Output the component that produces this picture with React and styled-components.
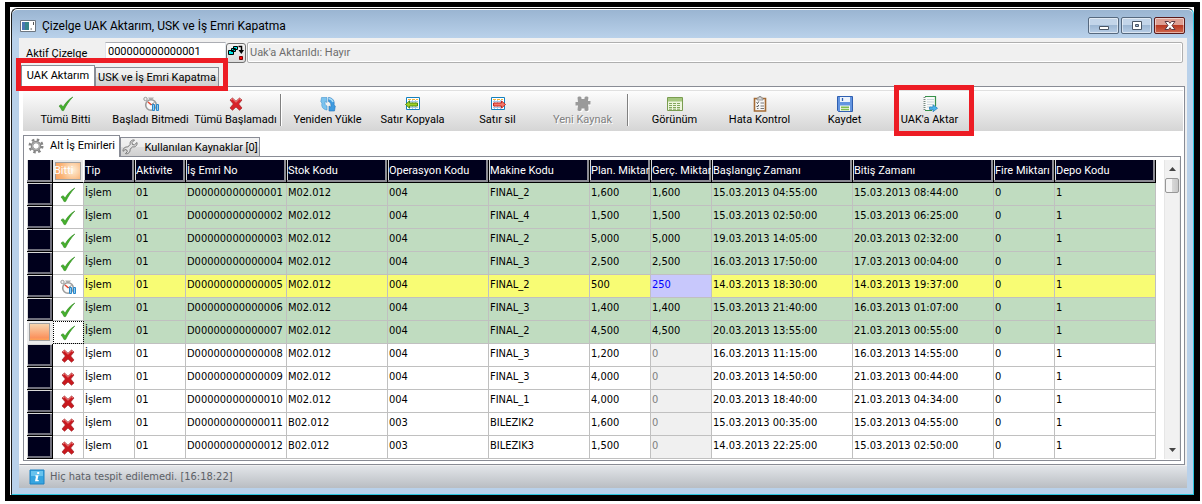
import styled, { createGlobalStyle, css } from 'styled-components'

const ui = "Roboto, 'Liberation Sans', Arial, sans-serif"
const grid = "'DejaVu Sans Condensed', 'Liberation Sans', sans-serif"

const GlobalStyle = createGlobalStyle`
  * {
    box-sizing: border-box;
  }

  body {
    margin: 0;
    background: #fff;
    color: #000;
    font-family: ${ui};
    font-size: 11px;
  }

  button, input {
    margin: 0;
    padding: 0;
    font: inherit;
    color: inherit;
  }

  svg {
    flex-shrink: 0;
  }
`

const Desktop = styled.div`
  display: flex;
  min-height: 100vh;
  padding: 2px 2px 3px 5px;
`

const Frame = styled.div`
  flex: 1;
  min-width: 0;
  display: flex;
  padding: 1px 0 0 1px;
  border: solid #000;
  border-width: 5px 6px 6px 5px;
  background: #fff;
`

const Window = styled.main`
  flex: 1;
  min-width: 0;
  display: flex;
  flex-direction: column;
  padding: 0 6px 6px 7px;
  border: 1px solid;
  border-color: #1c1c1c #29c4dd #29c4dd #1c1c1c;
  border-radius: 6px 6px 0 0;
  background: linear-gradient(#99b4d1, #b9d1ea 29px);
  box-shadow: inset 0 1px 0 #fff;
`

const TitleBar = styled.header`
  display: flex;
  align-items: center;
  gap: 6px;
  height: 29px;
  padding: 4px 2px 0 1px;
`

const Title = styled.h1`
  flex: 1;
  margin: 0;
  font: 400 12px/16px ${ui};
`

const WindowButtons = styled.div`
  display: flex;
  gap: 2px;
`

const WindowButton = styled.button`
  display: grid;
  place-items: center;
  width: 31px;
  height: 17px;
  border: 1px solid #56697f;
  border-radius: 2px;
  box-shadow: inset 0 0 0 1px rgba(255, 255, 255, 0.5);
  background: linear-gradient(#c3d5e9 50%, #9db7d3 50%, #b7cde6);

  ${({ $close }) => $close && css`
    border-color: #5a1a1a;
    background: linear-gradient(#dd9f93 50%, #b93923 50%, #d0674c);
  `}
`

const Content = styled.div`
  flex: 1;
  display: flex;
  flex-direction: column;
  background: #f0f0f0;
`

const FormRow = styled.div`
  display: flex;
  align-items: center;
  height: 27px;
  padding: 4px 4px 2px 7px;
`

const FieldLabel = styled.label`
  width: 79px;
  padding-top: 2px;
`

const TextInput = styled.input`
  width: 121px;
  height: 21px;
  padding: 0 0 2px 2px;
  border: 1px solid;
  border-color: #abadb3 #e3e9ef #e3e9ef #e2e3ea;
  background: #fff;
`

const PickButton = styled.button`
  display: grid;
  place-items: center;
  width: 20px;
  height: 20px;
  margin-right: 1px;
  border: 1px solid #707070;
  border-radius: 3px;
  background: linear-gradient(#f4f4f4, #dcdcdc);
`

const StateInput = styled.input`
  flex: 1;
  min-width: 0;
  height: 21px;
  padding-left: 2px;
  border: 1px solid #afafaf;
  border-radius: 2px;
  background: #f0f0f0;
  box-shadow: inset 0 0 0 1px #fff;
  color: #6d6d6d;
`

const TabBar = styled.div`
  position: relative;
  display: flex;
  align-items: flex-end;
  align-self: flex-start;
  height: 21px;
  padding-left: ${({ $inset }) => $inset || 0}px;
`

const Tab = styled.button`
  display: flex;
  align-items: center;
  justify-content: center;
  gap: ${({ $gap }) => $gap || 0}px;
  width: ${({ $width }) => $width}px;
  height: 19px;
  border: 1px solid #898c95;
  border-bottom: 0;
  background: linear-gradient(#f2f2f2, #ebebeb 50%, #dddddd 50%, #cfcfcf);
  white-space: nowrap;

  ${({ $active }) => $active && css`
    z-index: 1;
    height: 22px;
    margin-bottom: -1px;
    padding-bottom: 2px;
    background: #fff;
  `}
`

const Highlight = styled.span`
  position: absolute;
  inset: ${({ $inset }) => $inset};
  z-index: 2;
  border: 5px solid #ed1c24;
  pointer-events: none;
`

const Panel = styled.section`
  flex: 1;
  display: flex;
  flex-direction: column;
  margin-right: 2px;
  padding: 3px;
  border: 1px solid #898c95;
  border-left-color: #fff;
  background: #fff;
`

const Toolbar = styled.div`
  display: flex;
  height: 41px;
  margin: 0 -2px 4px 0;
  border-top: 1px solid #e0e0e0;
  background: linear-gradient(#fdfdfd, #d5d5d5);
`

const ToolButton = styled.button`
  position: relative;
  display: flex;
  flex-direction: column;
  align-items: center;
  width: 85px;
  padding-top: 5px;
  border: 0;
  background: none;
  line-height: 15px;
  white-space: nowrap;

  &:disabled {
    color: #808080;
    text-shadow: 1px 1px 0 #fff;
  }
`

const Separator = styled.span`
  width: 2px;
  height: 32px;
  margin: 3px 3px 0 2px;
  border-left: 1px solid #808080;
  border-right: 1px solid #fff;
`

const GridPanel = styled.div`
  flex: 1;
  display: flex;
  padding: 3px 0 1px 3px;
  border: 1px solid #898c95;
`

const TableWrap = styled.div`
  flex: 1;
  min-width: 0;
  padding-right: 8px;
`

const Table = styled.table`
  width: 100%;
  table-layout: fixed;
  border-collapse: separate;
  border-spacing: 0;
  font: 11px/16px ${grid};
`

const HeadCell = styled.th`
  height: 23px;
  padding: 0 0 0 1px;
  overflow: hidden;
  border-right: 1px solid #000;
  border-bottom: 1px solid #000;
  background: #00001c;
  box-shadow: inset -2px -2px 0 #8c8c94, inset 1px 0 0 #d8d8d8;
  color: #fff;
  font: 400 11px/16px ${ui};
  text-align: left;
  white-space: nowrap;

  ${({ $hot }) => $hot && css`
    border-right-color: #fff;
    background: radial-gradient(circle at 65% 45%, #fdf0da, #fbb274 55%, #f99550);
    box-shadow: inset 0 0 0 2px #e8e8e8, inset 0 0 0 3px #a0a0a0;
  `}
`

const RowHead = styled.th`
  height: 23px;
  padding: 0;
  border-right: 1px solid #000;
  border-bottom: 1px solid #000;
  background: #00001c;
  box-shadow: inset 1px 1px 0 #d8d8d8, inset -2px -2px 0 #70707c;

  ${({ $current }) => $current && css`
    border-color: #ececec;
    background: linear-gradient(#f6e4c0, #fb935f 75%, #ffb04a);
    box-shadow: inset 0 0 0 2px #ececec, inset 0 0 0 3px #a0a0a0;
  `}
`

const rowColors = {
  done: '#c0dcc0',
  paused: '#f8fc74',
  waiting: '#fff',
}

const Row = styled.tr`
  background: ${({ $state }) => rowColors[$state]};
`

const Cell = styled.td`
  height: 23px;
  padding: 2px 0 0 1px;
  overflow: hidden;
  border-right: 1px solid #c0c0c0;
  border-bottom: 1px solid #c0c0c0;
  vertical-align: top;
  white-space: nowrap;

  ${({ $kind }) => $kind === 'edited' && css`
    background: #c8c8fc;
    color: #00f;
  `}

  ${({ $kind }) => $kind === 'empty' && css`
    background: #f0f0f0;
    color: #808080;
  `}
`

const StateCell = styled.td`
  height: 23px;
  padding: 2px 0 0;
  border-right: 1px solid #c0c0c0;
  border-bottom: 1px solid #c0c0c0;
  background: #fff;
  text-align: center;
  outline: ${({ $focused }) => ($focused ? '1px dotted #000' : 'none')};
  outline-offset: -1px;

  svg {
    display: block;
    margin: 0 auto;
  }
`

const ScrollBar = styled.div`
  display: flex;
  flex-direction: column;
  width: 16px;
  border: 1px solid #e6e6e6;
  border-width: 0 1px;
  background: #f1f1f1;
`

const ScrollButton = styled.button`
  display: grid;
  place-items: center;
  height: 18px;
  border: 0;
  background: none;
`

const ScrollThumb = styled.div`
  height: 15px;
  margin-bottom: auto;
  border: 1px solid #979797;
  border-radius: 2px;
  background: linear-gradient(90deg, #f4f4f4 50%, #d8d8d8 50%, #c8c8c8);
`

const StatusBar = styled.footer`
  display: flex;
  align-items: center;
  gap: 5px;
  height: 22px;
  margin-top: 1px;
  padding: 0 10px;
  background: linear-gradient(#e2e5e9, #b9bdc2);
  color: #5c6066;
  font: 11px/16px ${grid};
`

const Svg = ({ children, ...rest }) => (
  <svg width="16" height="16" viewBox="0 0 16 16" fill="none" aria-hidden="true" {...rest}>
    {children}
  </svg>
)

const CheckIcon = () => (
  <Svg>
    <path d="M1 10l2.200-1.300 1.900 2.300C7.500 6.800 10.500 3.500 14.800 1 11 5 8 9.500 5.600 14.600H4C3.200 12.600 2.300 11.200 1 10z" fill="#45b02c" stroke="#2d8a1c" strokeWidth=".6" />
  </Svg>
)

const CrossIcon = ({ bright }) => (
  <Svg>
    <path d="M2 4l2.500-2L8 5.300 11.500 2 14 4l-3.300 4 3.300 4-2.500 2.300L8 11l-3.500 3.300L2 12l3.300-4z" fill={bright ? '#d8232a' : '#c9181e'} stroke="#96181b" strokeWidth=".6" />
    <path d="M3 4l1.500-1.200L8 6.300l3.500-3.500L13 4" stroke="#ef8583" />
  </Svg>
)

const ClockIcon = () => (
  <Svg>
    <circle cx="2.500" cy="3" r="1.700" fill="#f2f2f2" stroke="#999" />
    <path d="M5 1.500h6l-1.500 2h-3z" fill="#b0b0b0" />
    <circle cx="8" cy="9" r="5.300" fill="#fafafa" stroke="#9c9c9c" strokeWidth="1.600" />
    <path d="M5 6l3.500 3" stroke="#e8452c" strokeWidth="1.500" />
    <path d="M8.500 9L11 6.500" stroke="#555" />
    <path d="M9.500 8.500h2v6h-2zM13.500 8.500h2v6h-2z" fill="#8dcdf2" stroke="#2a86c8" />
  </Svg>
)

const ReloadIcon = () => (
  <Svg>
    <path d="M7 14C3 13.500 1 10.500 2 7L.8 5.800 1.500 1.500H7v5L5.300 5.300C4.500 8 5.300 9.500 7 10z" fill="#7cc3ee" stroke="#4596d0" strokeWidth=".6" />
    <path d="M8.500 1.500c4.500.3 6.500 4 5.500 7.500l1.300 1-.8 5H9v-5l1.700 1.200C11.500 8.500 10.500 6 8.500 5.500z" fill="#3f9be0" stroke="#2474ba" strokeWidth=".6" />
    <path d="M8.500 2.500C11 2.800 12.500 4 13 6" stroke="#a8dcf7" strokeWidth="1.500" />
  </Svg>
)

const SheetIcon = ({ remove }) => (
  <Svg>
    <path d="M1.500 1.500h13v12h-13z" fill="#fff" stroke="#1580bd" />
    <path d="M3 3.500h10" stroke="#f5b73c" strokeDasharray="3 1" />
    <path d="M3 5.500h10M3 11.500h10M4.500 4v9M7.500 4v9M10.500 4v9" stroke="#a9c8e6" />
    {remove ? (
      <path d="M3.500 7h8V5l4 3.500-4 3.500v-2h-8z" fill="#f4796b" stroke="#c8281f" />
    ) : (
      <path d="M12.500 7h-8V5l-4 3.500 4 3.500v-2h8z" fill="#a2d025" stroke="#4d8a12" />
    )}
  </Svg>
)

const puzzlePath = 'M2.500 1.500C3 0 6 0 6.500 1.500V3h3V1.500C10 0 13 0 13.500 1.500L13 5h2.500v3.500H13L13.500 11v3C13 15.500 10 15.500 9.500 14v-1.500h-3V14C6 15.500 3 15.500 2.500 14L3 9.500H.5V6H3z'

const PuzzleIcon = () => (
  <Svg>
    <path d={puzzlePath} transform="translate(1 1)" fill="#fff" />
    <path d={puzzlePath} fill="#9a9a9a" />
  </Svg>
)

const TableIcon = () => (
  <Svg>
    <path d="M.5 1.500h15v13H.5z" fill="#eef6de" stroke="#7a9d50" />
    <path d="M1 2h14v3.500H1z" fill="#a5c77f" />
    <path d="M2 7.500h12M2 9.500h12M2 11.500h12M2 13.200h12" stroke="#83a75c" strokeDasharray="3 1" />
  </Svg>
)

const ClipboardIcon = () => (
  <Svg>
    <path d="M2.500 2.500h11v12.500h-11z" fill="#f7f7f7" stroke="#a56b34" strokeWidth="1.600" />
    <path d="M5 4V2h2V.5h2V2h2v2z" fill="#ddd" stroke="#777" strokeWidth=".7" />
    <path d="M4.500 6.500l1 1 1.200-2M4.500 10l1 1 1.200-2" stroke="#333" strokeWidth=".9" />
    <path d="M8.500 7H12M8.500 10H12M8.500 12.500H12M5 12.500h1.500" stroke="#777" />
  </Svg>
)

const FloppyIcon = () => (
  <Svg>
    <path d="M.5.5h15v15h-14l-1-1z" fill="#6294e0" stroke="#2f5fb0" />
    <path d="M3 1h10v5H3z" fill="#edf3fb" />
    <path d="M5.500 2v3" stroke="#2f5fb0" strokeWidth="1.300" />
    <path d="M3 9.500h10V15H3z" fill="#f3f8ee" />
    <path d="M4 11.200h8M4 13.500h8" stroke="#7fbd50" strokeWidth="1.600" />
  </Svg>
)

const ExportIcon = () => (
  <Svg>
    <path d="M2.500.5h11v14h-11z" fill="#f8faf8" />
    <path d="M3 .5h10.500v10M3 14.500h7" stroke="#37914a" strokeWidth="1.200" />
    <path d="M5 3.500h7M5 6h7M5 8.500h6M5 11h4" stroke="#cdd6dc" />
    <path d="M2.500 1v14" stroke="#7c8c84" strokeWidth="2" strokeDasharray="1 1" />
    <path d="M7.500 11h3.500V8.700l4.500 3.600-4.500 3.400v-2.300H7.500z" fill="#4bb3ea" stroke="#1c78b4" strokeWidth=".7" />
  </Svg>
)

const GearIcon = () => (
  <Svg>
    <circle cx="8" cy="8" r="6.300" stroke="#858585" strokeWidth="2.400" strokeDasharray="2.500 2.450" />
    <circle cx="8" cy="8" r="4" fill="#fff" stroke="#858585" strokeWidth="2.500" />
    <circle cx="8" cy="8" r="3.800" stroke="#b4b4b4" />
  </Svg>
)

const WrenchIcon = () => (
  <Svg>
    <path d="M12.500 1L10 3.500l.4 2 2 .4L15 3.500c.6 2.500-1.500 5-4.300 4.300L8 10.300c.5 2.700-1.800 5-4.500 4.400l1.800-2-.5-1.700-1.700-.5-2 1.800C.6 9.700 3 7.600 5.700 8L8.200 5.400C7.600 2.700 9.700.5 12.500 1z" fill="#e2e2e2" stroke="#747474" />
  </Svg>
)

const InfoIcon = () => (
  <Svg>
    <path d="M1 1h14v14H1z" fill="#36a5e0" stroke="#1c83c4" />
    <path d="M2 2h12v5H2z" fill="#68c3ee" />
    <path d="M8.200 3h2v2h-2zM6.500 6.300h3L8.500 11h1.200v1.200H6L7 7.500h-.8z" fill="#fff" />
  </Svg>
)

const AppIcon = () => (
  <Svg>
    <path d="M.5 2.500h15v11H.5z" fill="#fff" stroke="#6d7680" />
    <path d="M2 4h7v8H2z" fill="#37868b" />
    <path d="M2 4h3v8H2z" fill="#4b77b4" />
    <path d="M10.500 11h1.500M13.500 4v3" stroke="#555" />
  </Svg>
)

const PickIcon = () => (
  <Svg>
    <path d="M5.500 1.500h4v3h-4zM3.500 3.500h4v3h-4zM.5 5.500h5v4h-5z" fill="#00e5e5" stroke="#000" />
    <path d="M10.500 1.500h3V6" stroke="#000" strokeWidth="1.500" />
    <path d="M10.500 5H16l-2.700 4z" fill="#000" />
    <path d="M11.500 11.500h3v3h-3z" fill="#f00" stroke="#700" />
  </Svg>
)

const tools = [
  { label: 'Tümü Bitti', icon: <CheckIcon /> },
  { label: 'Başladı Bitmedi', icon: <ClockIcon /> },
  { label: 'Tümü Başlamadı', icon: <CrossIcon bright /> },
  null,
  { label: 'Yeniden Yükle', icon: <ReloadIcon /> },
  { label: 'Satır Kopyala', icon: <SheetIcon /> },
  { label: 'Satır sil', icon: <SheetIcon remove /> },
  { label: 'Yeni Kaynak', icon: <PuzzleIcon />, disabled: true },
  null,
  { label: 'Görünüm', icon: <TableIcon /> },
  { label: 'Hata Kontrol', icon: <ClipboardIcon /> },
  { label: 'Kaydet', icon: <FloppyIcon /> },
  { label: "UAK'a Aktar", icon: <ExportIcon />, marked: true },
]

const columns = [
  ['', 26], ['Bitti', 31], ['Tip', 51], ['Aktivite', 51], ['İş Emri No', 101],
  ['Stok Kodu', 101], ['Operasyon Kodu', 101], ['Makine Kodu', 101],
  ['Plan. Miktar', 61], ['Gerç. Miktar', 61], ['Başlangıç Zamanı', 141],
  ['Bitiş Zamanı', 141], ['Fire Miktarı', 61], ['Depo Kodu', 101],
]
const totalWidth = columns.reduce((sum, [, width]) => sum + width, 0)

const Col = styled.col`
  width: ${({ $share }) => $share}%;
`

const orders = [
  ['done', 'M02.012', '004', 'FINAL_2', '1,600', '1,600', '15.03.2013 04:55:00', '15.03.2013 08:44:00'],
  ['done', 'M02.012', '004', 'FINAL_4', '1,500', '1,500', '15.03.2013 02:50:00', '15.03.2013 06:25:00'],
  ['done', 'M02.012', '004', 'FINAL_2', '5,000', '5,000', '19.03.2013 14:05:00', '20.03.2013 02:32:00'],
  ['done', 'M02.012', '004', 'FINAL_3', '2,500', '2,500', '16.03.2013 17:50:00', '17.03.2013 00:04:00'],
  ['paused', 'M02.012', '004', 'FINAL_2', '500', '250', '14.03.2013 18:30:00', '14.03.2013 19:37:00'],
  ['done', 'M02.012', '004', 'FINAL_3', '1,400', '1,400', '15.03.2013 21:40:00', '16.03.2013 01:07:00'],
  ['done', 'M02.012', '004', 'FINAL_2', '4,500', '4,500', '20.03.2013 13:55:00', '21.03.2013 00:55:00'],
  ['waiting', 'M02.012', '004', 'FINAL_3', '1,200', '0', '16.03.2013 11:15:00', '16.03.2013 14:55:00'],
  ['waiting', 'M02.012', '004', 'FINAL_3', '4,000', '0', '20.03.2013 14:50:00', '21.03.2013 00:44:00'],
  ['waiting', 'M02.012', '004', 'FINAL_1', '4,000', '0', '20.03.2013 18:40:00', '21.03.2013 04:34:00'],
  ['waiting', 'B02.012', '003', 'BILEZIK2', '1,600', '0', '15.03.2013 00:35:00', '15.03.2013 04:55:00'],
  ['waiting', 'B02.012', '003', 'BILEZIK3', '1,500', '0', '14.03.2013 22:25:00', '15.03.2013 02:50:00'],
]

const stateIcons = {
  done: <CheckIcon />,
  paused: <ClockIcon />,
  waiting: <CrossIcon />,
}

const actualKinds = { paused: 'edited', waiting: 'empty' }

const currentRow = 6

const OrderRow = ({ order, index }) => {
  const [state, stock, operation, machine, planned, actual, start, end] = order
  const current = index === currentRow

  return (
    <Row $state={state}>
      <RowHead scope="row" $current={current} />
      <StateCell $focused={current}>{stateIcons[state]}</StateCell>
      <Cell>İşlem</Cell>
      <Cell>01</Cell>
      <Cell>D{String(index + 1).padStart(14, '0')}</Cell>
      <Cell>{stock}</Cell>
      <Cell>{operation}</Cell>
      <Cell>{machine}</Cell>
      <Cell>{planned}</Cell>
      <Cell $kind={actualKinds[state]}>{actual}</Cell>
      <Cell>{start}</Cell>
      <Cell>{end}</Cell>
      <Cell>0</Cell>
      <Cell>1</Cell>
    </Row>
  )
}

const OrderTable = () => (
  <Table>
    <colgroup>
      {columns.map(([name, width]) => (
        <Col key={name} $share={(width / totalWidth) * 100} />
      ))}
    </colgroup>
    <thead>
      <tr>
        {columns.map(([name]) => (
          <HeadCell key={name} scope="col" $hot={name === 'Bitti'}>{name}</HeadCell>
        ))}
      </tr>
    </thead>
    <tbody>
      {orders.map((order, index) => (
        <OrderRow key={index} order={order} index={index} />
      ))}
    </tbody>
  </Table>
)

const App = () => (
  <Desktop>
    <GlobalStyle />
    <Frame>
      <Window>
        <TitleBar>
          <AppIcon />
          <Title>Çizelge UAK Aktarım, USK ve İş Emri Kapatma</Title>
          <WindowButtons>
            <WindowButton type="button" aria-label="Simge durumuna küçült">
              <Svg><path d="M3.500 8.500h9v3h-9z" fill="#fff" stroke="#4a5666" /></Svg>
            </WindowButton>
            <WindowButton type="button" aria-label="Ekranı kapla">
              <Svg><path d="M3.500 3.500h9v8h-9zM6.500 6.500v2h3v-2z" fill="#fff" fillRule="evenodd" stroke="#4a5666" /></Svg>
            </WindowButton>
            <WindowButton type="button" $close aria-label="Kapat">
              <Svg><path d="M3 3.500h3.500L8 5.300l1.500-1.800H13L10 7.500l3 4H9.500L8 9.700l-1.500 1.800H3l3-4z" fill="#fff" stroke="#5b3a44" /></Svg>
            </WindowButton>
          </WindowButtons>
        </TitleBar>
        <Content>
          <FormRow>
            <FieldLabel htmlFor="schedule">Aktif Çizelge</FieldLabel>
            <TextInput id="schedule" defaultValue="000000000000001" />
            <PickButton type="button" aria-label="Çizelge seç"><PickIcon /></PickButton>
            <StateInput aria-label="Durum" defaultValue="Uak'a Aktarıldı: Hayır" disabled />
          </FormRow>
          <TabBar role="tablist" $inset={2}>
            <Tab type="button" role="tab" aria-selected="true" $active $width={74}>UAK Aktarım</Tab>
            <Tab type="button" role="tab" aria-selected="false" $width={124}>USK ve İş Emri Kapatma</Tab>
            <Highlight $inset="-7px -9px -5px -3px" />
          </TabBar>
          <Panel>
            <Toolbar role="toolbar">
              {tools.map((tool, index) => (tool ? (
                <ToolButton key={tool.label} type="button" disabled={tool.disabled}>
                  {tool.icon}
                  {tool.label}
                  {tool.marked && <Highlight $inset="-6px -2px -5px 7px" />}
                </ToolButton>
              ) : (
                <Separator key={index} />
              )))}
            </Toolbar>
            <TabBar role="tablist">
              <Tab type="button" role="tab" aria-selected="true" $active $gap={6} $width={97}>
                <GearIcon />
                Alt İş Emirleri
              </Tab>
              <Tab type="button" role="tab" aria-selected="false" $gap={6} $width={140}>
                <WrenchIcon />
                Kullanılan Kaynaklar [0]
              </Tab>
            </TabBar>
            <GridPanel>
              <TableWrap>
                <OrderTable />
              </TableWrap>
              <ScrollBar>
                <ScrollButton type="button" aria-label="Yukarı">
                  <svg width="7" height="4" viewBox="0 0 7 4" aria-hidden="true"><path d="M0 4l3.500-4L7 4z" fill="#444" /></svg>
                </ScrollButton>
                <ScrollThumb />
                <ScrollButton type="button" aria-label="Aşağı">
                  <svg width="7" height="4" viewBox="0 0 7 4" aria-hidden="true"><path d="M0 0l3.500 4L7 0z" fill="#444" /></svg>
                </ScrollButton>
              </ScrollBar>
            </GridPanel>
          </Panel>
          <StatusBar>
            <InfoIcon />
            Hiç hata tespit edilemedi. [16:18:22]
          </StatusBar>
        </Content>
      </Window>
    </Frame>
  </Desktop>
)

export default App
